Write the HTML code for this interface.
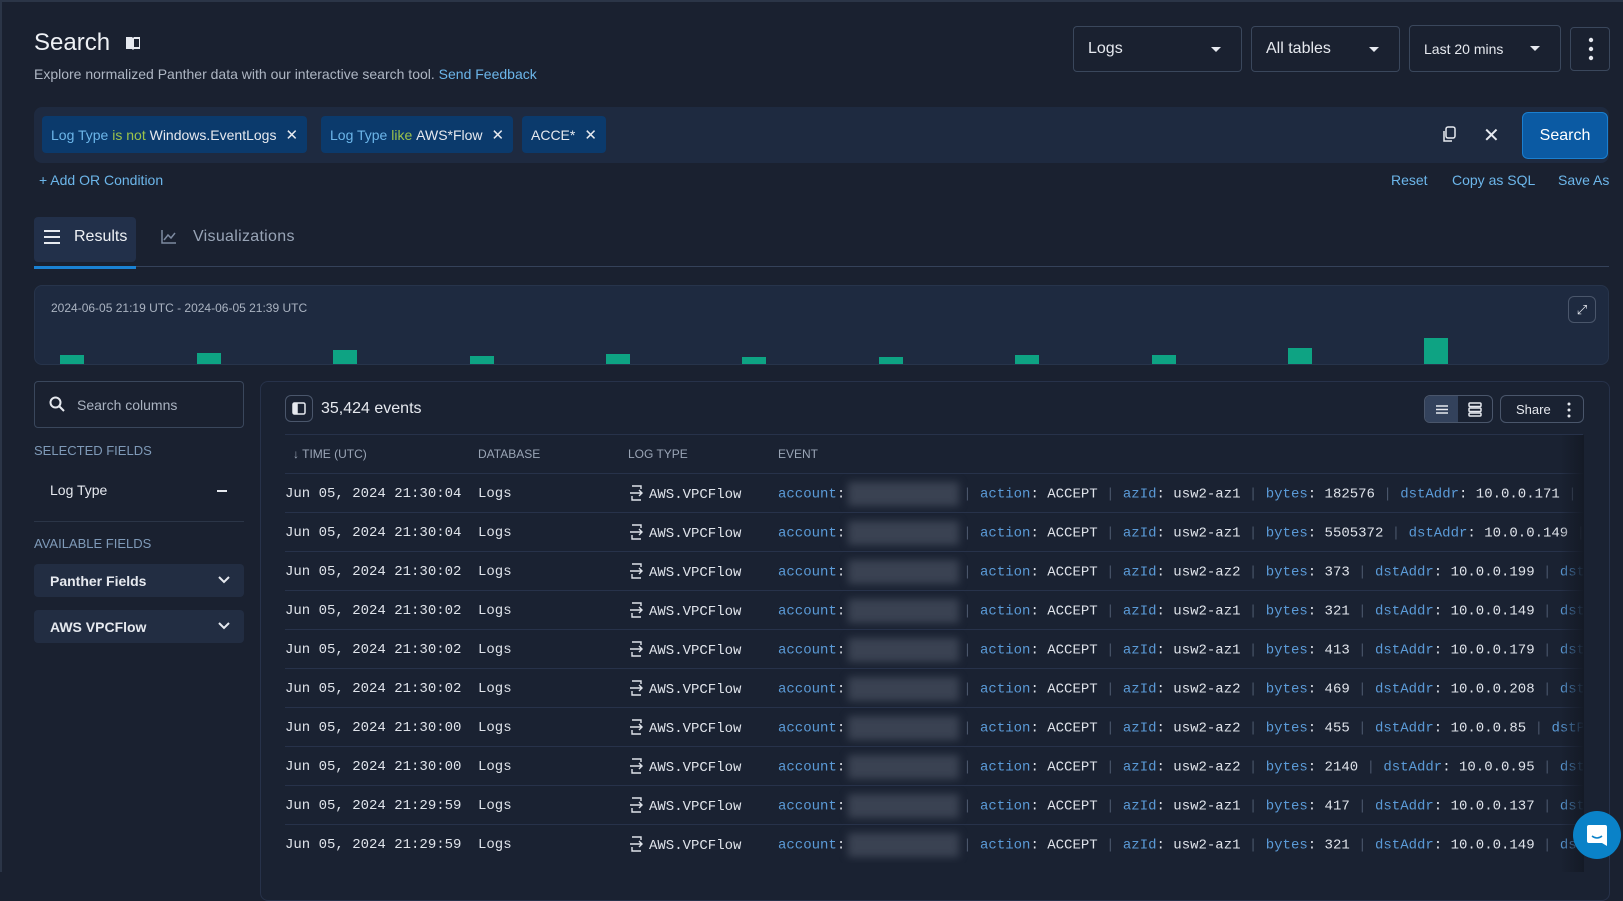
<!DOCTYPE html>
<html><head><meta charset="utf-8"><style>
*{box-sizing:border-box;margin:0;padding:0}
body{width:1623px;height:872px;overflow:hidden;background:#1a2130;font-family:"Liberation Sans",sans-serif;color:#e6e9ef;position:relative}
.a{position:absolute}
.dd{position:absolute;border:1px solid #3a475c;border-radius:4px;height:46px;display:flex;align-items:center;padding-left:14px;font-size:16px;color:#e6e9ef}
.dd .car{position:absolute;right:20px;top:20px;border-left:5px solid transparent;border-right:5px solid transparent;border-top:5px solid #e6e9ef}
.chip{position:absolute;top:116px;height:37px;background:#0b3a6c;border-radius:4px;font-size:14px;display:flex;align-items:center;padding:0 9px;white-space:nowrap}
.chip .k{color:#6cb6ea}.chip .o{color:#9cc34a}.chip .x{margin-left:9px;font-size:15px}
.lnk{position:absolute;top:172px;font-size:14px;color:#6cb6ea}
.row{position:absolute;left:285px;width:1298px;height:39px;border-top:1px solid #27324a;font-family:"Liberation Mono",monospace;font-size:14px;color:#dfe3ea;white-space:nowrap;overflow:hidden}
.row span.c{position:absolute;top:11px}
.b{color:#5b9bd8}.p{color:#4a566b}
.blur{display:inline-block;width:111px;height:24px;vertical-align:middle;background:#3a4252;filter:blur(4px);margin:0 4px 0 3px}
.hdr{position:absolute;top:447px;font-size:12px;color:#9aa5b6}
.bar{position:absolute;bottom:0;width:24px;background:#0ea383}
</style></head><body>
<div class="a" style="left:0;top:0;width:1623px;height:2px;background:#2b3547"></div>
<div class="a" style="left:0;top:0;width:2px;height:872px;background:#2b3547"></div>
<div class="a" style="left:34px;top:29px;font-size:24px;color:#eef1f5">Search</div>
<svg class="a" style="left:125px;top:36px" width="16" height="14" viewBox="0 0 16 14"><path d="M1 1h6l1 1 1-1h6v12H9l-1 1-1-1H1z" fill="#e6e9ef"/><path d="M9 3h5v8H9z" fill="#1a2130"/></svg>
<div class="a" style="left:34px;top:66px;font-size:14px;color:#aeb6c3">Explore normalized Panther data with our interactive search tool. <span style="color:#6cb6ea">Send Feedback</span></div>

<div class="dd" style="left:1073px;top:26px;width:169px">Logs<span class="car"></span></div>
<div class="dd" style="left:1251px;top:26px;width:149px">All tables<span class="car"></span></div>
<div class="dd" style="left:1409px;top:25px;width:152px;height:47px;font-size:14px">Last 20 mins<span class="car"></span></div>
<div class="dd" style="left:1570px;top:27px;width:40px;height:44px;padding:0"><svg style="margin-left:17px" width="6" height="24"><circle cx="3" cy="3" r="2.2" fill="#e6e9ef"/><circle cx="3" cy="12" r="2.2" fill="#e6e9ef"/><circle cx="3" cy="21" r="2.2" fill="#e6e9ef"/></svg></div>

<div class="a" style="left:34px;top:107px;width:1575px;height:56px;background:#1e2a40;border-radius:8px"></div>
<div class="chip" style="left:42px"><span class="k">Log Type&nbsp;</span><span class="o">is not&nbsp;</span>Windows.EventLogs<span class="x">✕</span></div>
<div class="chip" style="left:321px"><span class="k">Log Type&nbsp;</span><span class="o">like&nbsp;</span>AWS*Flow<span class="x">✕</span></div>
<div class="chip" style="left:522px">ACCE*<span class="x">✕</span></div>
<svg class="a" style="left:1441px;top:126px" width="16" height="18" viewBox="0 0 16 18" fill="none" stroke="#e6e9ef" stroke-width="1.5"><rect x="5" y="1" width="9" height="11" rx="2"/><path d="M3 5v10h8"/></svg>
<div class="a" style="left:1483px;top:123px;font-size:20px;color:#e6e9ef">✕</div>
<div class="a" style="left:1522px;top:112px;width:86px;height:47px;background:#0b5aa3;border:1px solid #1a7fd0;border-radius:6px;font-size:16px;display:flex;align-items:center;justify-content:center;color:#fff">Search</div>

<div class="lnk" style="left:39px">+ Add OR Condition</div>
<div class="lnk" style="left:1391px">Reset</div>
<div class="lnk" style="left:1452px">Copy as SQL</div>
<div class="lnk" style="left:1558px">Save As</div>

<div class="a" style="left:34px;top:217px;width:102px;height:45px;background:#22304a;border-radius:4px"></div>
<svg class="a" style="left:43px;top:229px" width="18" height="16"><path d="M1 2h16M1 8h16M1 14h16" stroke="#e6e9ef" stroke-width="2"/></svg>
<div class="a" style="left:74px;top:228px;font-size:16px;color:#eef1f5">Results</div>
<svg class="a" style="left:161px;top:229px" width="16" height="15" fill="none" stroke="#7d8aa0" stroke-width="1.5"><path d="M1 1v13h14M3 11l4-5 3 3 4-5"/></svg>
<div class="a" style="left:193px;top:228px;font-size:16px;color:#98a4b6;letter-spacing:0.3px">Visualizations</div>
<div class="a" style="left:34px;top:266px;width:1575px;height:1px;background:#35425a"></div>
<div class="a" style="left:34px;top:266px;width:102px;height:3px;background:#1a82d4"></div>

<div class="a" style="left:34px;top:285px;width:1575px;height:80px;background:#1e2a40;border:1px solid #27344b;border-radius:8px">
<div class="a" style="left:16px;top:15px;font-size:12px;color:#aab3c1">2024-06-05 21:19 UTC - 2024-06-05 21:39 UTC</div>
<div class="a" style="right:12px;top:10px;width:28px;height:27px;border:1px solid #4a566b;border-radius:6px;color:#e6e9ef;font-size:13px;text-align:center;line-height:25px">⤢</div>
<div class="bar" style="left:25px;height:9px"></div><div class="bar" style="left:162px;height:11px"></div><div class="bar" style="left:298px;height:14px"></div><div class="bar" style="left:435px;height:8px"></div><div class="bar" style="left:571px;height:10px"></div><div class="bar" style="left:707px;height:7px"></div><div class="bar" style="left:844px;height:7px"></div><div class="bar" style="left:980px;height:9px"></div><div class="bar" style="left:1117px;height:9px"></div><div class="bar" style="left:1253px;height:16px"></div><div class="bar" style="left:1389px;height:26px"></div>
</div>

<div class="a" style="left:34px;top:381px;width:210px;height:47px;border:1px solid #3a475c;border-radius:4px"></div>
<svg class="a" style="left:49px;top:396px" width="16" height="16" fill="none" stroke="#e6e9ef" stroke-width="2"><circle cx="6.5" cy="6.5" r="5"/><path d="M10 10l5 5"/></svg>
<div class="a" style="left:77px;top:397px;font-size:14px;color:#aab3c1">Search columns</div>
<div class="a" style="left:34px;top:443px;font-size:13px;color:#7f9ab8">SELECTED FIELDS</div>
<div class="a" style="left:50px;top:482px;font-size:14px;color:#e6e9ef">Log Type</div>
<div class="a" style="left:217px;top:490px;width:10px;height:2px;background:#e6e9ef"></div>
<div class="a" style="left:34px;top:521px;width:210px;height:1px;background:#2b3547"></div>
<div class="a" style="left:34px;top:536px;font-size:13px;color:#7f9ab8">AVAILABLE FIELDS</div>
<div class="a" style="left:34px;top:564px;width:210px;height:33px;background:#222d42;border-radius:4px;font-size:14px;font-weight:bold;padding:9px 16px">Panther Fields<svg style="position:absolute;right:14px;top:12px" width="12" height="8" fill="none" stroke="#e6e9ef" stroke-width="2"><path d="M1 1l5 5 5-5"/></svg></div>
<div class="a" style="left:34px;top:610px;width:210px;height:33px;background:#222d42;border-radius:4px;font-size:14px;font-weight:bold;padding:9px 16px">AWS VPCFlow<svg style="position:absolute;right:14px;top:12px" width="12" height="8" fill="none" stroke="#e6e9ef" stroke-width="2"><path d="M1 1l5 5 5-5"/></svg></div>

<div class="a" style="left:260px;top:381px;width:1350px;height:520px;border:1px solid #27324a;border-radius:8px;background:#1a2232"></div>
<div class="a" style="left:285px;top:395px;width:28px;height:27px;border:1px solid #4a566b;border-radius:6px"><svg style="margin:6px 0 0 6px" width="14" height="13" fill="none" stroke="#e6e9ef" stroke-width="1.5"><rect x="1" y="1" width="12" height="11" rx="1.5"/><rect x="2" y="2" width="3" height="9" fill="#e6e9ef"/></svg></div>
<div class="a" style="left:321px;top:400px;font-size:16px;color:#e6e9ef">35,424 events</div>
<div class="a" style="left:1424px;top:395px;width:69px;height:28px;border:1px solid #4a566b;border-radius:6px;overflow:hidden"><div style="position:absolute;left:0;top:0;width:33px;height:28px;background:#33425c"></div><svg style="position:absolute;left:10px;top:8px" width="14" height="11"><path d="M1 2h12M1 5.5h12M1 9h12" stroke="#e6e9ef" stroke-width="1.5"/></svg><svg style="position:absolute;left:43px;top:6px" width="14" height="15" fill="none" stroke="#e6e9ef" stroke-width="1.5"><rect x="1" y="1" width="12" height="3.5" rx="1"/><rect x="1" y="6" width="12" height="3.5" rx="1"/><rect x="1" y="11" width="12" height="3" rx="1"/></svg></div>
<div class="a" style="left:1500px;top:395px;width:84px;height:28px;border:1px solid #4a566b;border-radius:6px;font-size:13px;padding:6px 15px;color:#e6e9ef">Share<svg style="position:absolute;right:12px;top:6px" width="4" height="16"><circle cx="2" cy="2" r="1.5" fill="#e6e9ef"/><circle cx="2" cy="8" r="1.5" fill="#e6e9ef"/><circle cx="2" cy="14" r="1.5" fill="#e6e9ef"/></svg></div>
<div class="a" style="left:285px;top:434px;width:1298px;height:1px;background:#27324a"></div>
<div class="hdr" style="left:293px">↓ TIME (UTC)</div>
<div class="hdr" style="left:478px">DATABASE</div>
<div class="hdr" style="left:628px">LOG TYPE</div>
<div class="hdr" style="left:778px">EVENT</div>

<div id="rows"></div>
<script>
var d=[["21:30:04","az1","182576","171"],["21:30:04","az1","5505372","149"],["21:30:02","az2","373","199"],["21:30:02","az1","321","149"],["21:30:02","az1","413","179"],["21:30:02","az2","469","208"],["21:30:00","az2","455","85"],["21:30:00","az2","2140","95"],["21:29:59","az1","417","137"],["21:29:59","az1","321","149"]];
var h="";
var icon='<svg width="16" height="16" style="vertical-align:-3px;margin-right:4px" fill="none" stroke="#dfe3ea" stroke-width="1.4"><path d="M3 1h9v3M1 8h12M10 5l3 3-3 3M3 11v4h9"/></svg>';
d.forEach(function(r,i){
h+='<div class="row" style="top:'+(473+i*39)+'px"><span class="c" style="left:0;top:12px">Jun 05, 2024 '+r[0]+'</span><span class="c" style="left:193px;top:12px">Logs</span><span class="c" style="left:344px">'+icon+'AWS.VPCFlow</span><span class="c" style="left:493px;top:8px"><span class="b">account</span>:<span class="blur"></span><span class="p">|</span>&nbsp;<span class="b">action</span>: ACCEPT <span class="p">|</span> <span class="b">azId</span>: usw2-'+r[1]+' <span class="p">|</span> <span class="b">bytes</span>: '+r[2]+' <span class="p">|</span> <span class="b">dstAddr</span>: 10.0.0.'+r[3]+' <span class="p">|</span> <span class="b">dstPort</span>: 443</span></div>';
});
document.getElementById("rows").innerHTML=h;
</script>
<div class="a" style="left:1560px;top:435px;width:24px;height:437px;background:linear-gradient(to right,rgba(20,26,38,0),#141a26)"></div>
<div class="a" style="left:1573px;top:811px;width:48px;height:48px;border-radius:50%;background:#0a82c8"><svg style="position:absolute;left:13px;top:13px" width="22" height="23"><path d="M3 1h16a2 2 0 0 1 2 2v19l-5-3H3a2 2 0 0 1-2-2V3a2 2 0 0 1 2-2z" fill="#fff"/><path d="M6 12q5 4 10 0" stroke="#0a82c8" stroke-width="1.5" fill="none"/></svg></div>
</body></html>
